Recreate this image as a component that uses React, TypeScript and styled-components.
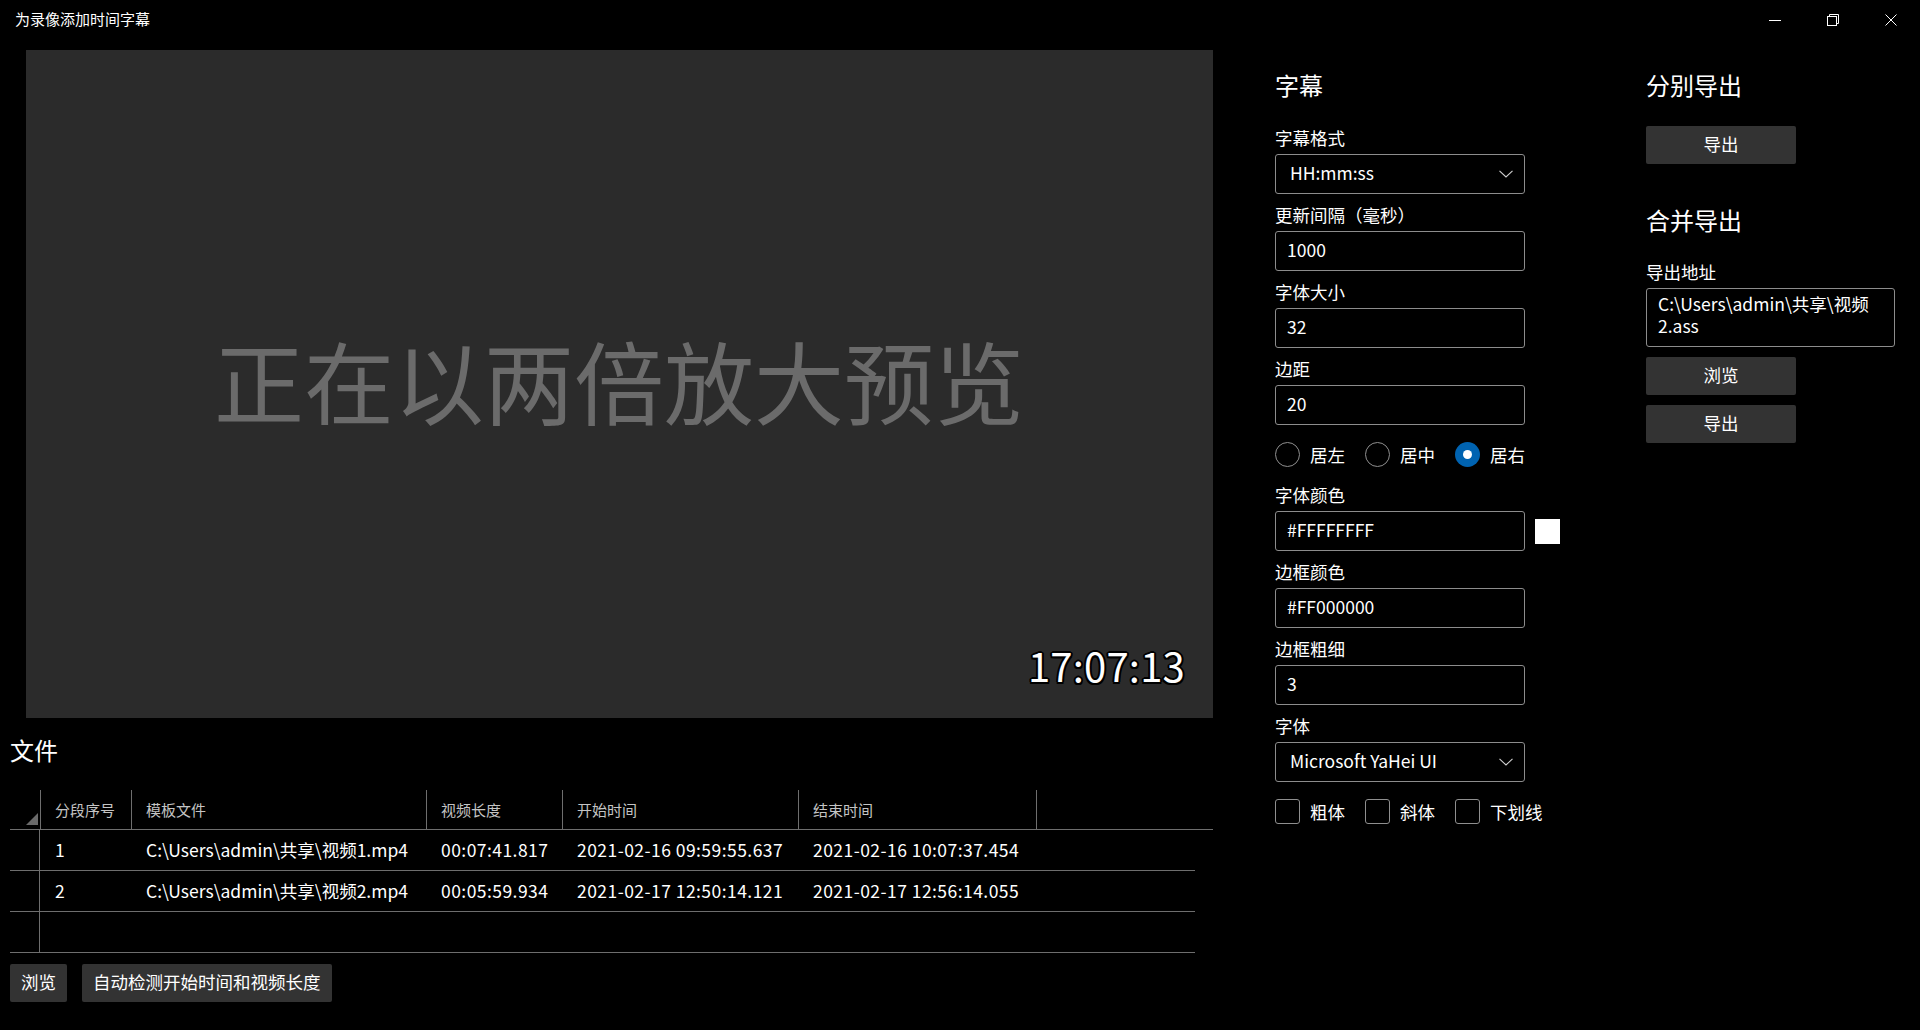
import styled, { createGlobalStyle } from "styled-components";

const GlobalStyle = createGlobalStyle`
  html, body {
    margin: 0;
    padding: 0;
    background: #000;
  }
  body {
    font-family: "Noto Sans CJK SC", "Microsoft YaHei UI", sans-serif;
    color: #fff;
  }
  * {
    box-sizing: border-box;
  }
`;

const Window = styled.div`
  width: 1920px;
  height: 1030px;
  background: #000;
  display: flex;
  flex-direction: column;
  overflow: hidden;
`;

const TitleBar = styled.div`
  height: 40px;
  display: flex;
  align-items: center;
  flex-shrink: 0;
`;

const Title = styled.div`
  flex: 1;
  padding-left: 15px;
  font-size: 15px;
  line-height: 1;
  margin-top: -4px;
`;

const CaptionButton = styled.div`
  width: 58px;
  height: 40px;
  display: flex;
  align-items: center;
  justify-content: center;
`;

const Body = styled.div`
  flex: 1;
  display: flex;
`;

const LeftPane = styled.div`
  width: 1214px;
  padding-left: 10px;
  display: flex;
  flex-direction: column;
`;

const Preview = styled.div`
  position: relative;
  margin: 10px 0 0 16px;
  width: 1187px;
  height: 668px;
  background: #2b2b2b;
  display: flex;
  align-items: center;
  justify-content: center;
`;

const PreviewText = styled.div`
  font-size: 90px;
  line-height: 1;
  color: #6b6b6b;
  margin: 0 0 10px -1px;
`;

const Clock = styled.div`
  position: absolute;
  right: 28px;
  bottom: 33px;
  font-size: 40px;
  line-height: 1;
  color: #fff;
  letter-spacing: 0.2px;
  text-shadow: -1.5px -1.5px 0 #000, 1.5px -1.5px 0 #000, -1.5px 1.5px 0 #000,
    1.5px 1.5px 0 #000, 0 2px 0 #000, 0 -2px 0 #000, 2px 0 0 #000, -2px 0 0 #000;
`;

const SectionTitle = styled.div<{ $gap?: number }>`
  font-size: 24px;
  line-height: 32px;
  margin-top: ${(p) => p.$gap ?? 0}px;
`;

const Table = styled.div`
  margin-top: 24px;
  width: 1203px;
`;

const columns = "30px 91px 295px 136px 236px 238px 1fr";

const HeaderRow = styled.div`
  display: grid;
  grid-template-columns: ${columns};
  height: 40px;
  border-bottom: 1px solid #6e6e6e;
`;

const Corner = styled.div`
  position: relative;
`;

const CornerMark = styled.div`
  position: absolute;
  right: 2px;
  bottom: 4px;
  width: 0;
  height: 0;
  border-left: 12px solid transparent;
  border-bottom: 12px solid #6a6a6a;
`;

const HeadCell = styled.div`
  border-left: 1px solid #6e6e6e;
  padding-left: 14px;
  font-size: 15px;
  color: #c4c4c4;
  display: flex;
  align-items: center;
`;

const DataRow = styled.div`
  display: grid;
  grid-template-columns: ${columns};
  width: 1185px;
  height: 41px;
  border-bottom: 1px solid #6e6e6e;
`;

const RowHeader = styled.div`
  border-right: 1px solid #6e6e6e;
`;

const Cell = styled.div<{ $spaced?: boolean }>`
  padding: 0 0 2px 15px;
  font-size: 17.5px;
  white-space: nowrap;
  letter-spacing: ${(p) => (p.$spaced ? "0.45px" : "0")};
  display: flex;
  align-items: center;
`;

const ButtonRow = styled.div`
  display: flex;
  gap: 15px;
  margin-top: 11px;
`;

const Button = styled.div<{ $width?: number }>`
  height: 38px;
  ${(p) => (p.$width ? `width: ${p.$width}px;` : "padding: 0 11px;")}
  background: #333333;
  border-radius: 2px;
  font-size: 17.5px;
  padding-bottom: 4px;
  display: flex;
  align-items: center;
  justify-content: center;
`;

const SettingsColumn = styled.div`
  width: 285px;
  margin-left: 61px;
  padding-top: 29px;
  display: flex;
  flex-direction: column;
`;

const Fields = styled.div`
  margin-top: 25px;
  display: flex;
  flex-direction: column;
  gap: 9px;
`;

const Field = styled.div`
  display: flex;
  flex-direction: column;
`;

const Label = styled.div`
  font-size: 17.5px;
  line-height: 24px;
  margin-bottom: 4px;
`;

const FieldLine = styled.div`
  display: flex;
  align-items: center;
  gap: 10px;
`;

const TextBox = styled.input`
  width: 250px;
  height: 40px;
  background: #000;
  border: 1px solid #8c8c8c;
  border-radius: 3px;
  color: #fff;
  font-family: "Noto Sans CJK SC", sans-serif;
  font-size: 17.5px;
  padding: 0 11px 4px;
  outline: none;
`;

const Combo = styled.div`
  width: 250px;
  height: 40px;
  border: 1px solid #8c8c8c;
  border-radius: 3px;
  padding: 0 11px 0 14px;
  font-size: 17.5px;
  display: flex;
  align-items: center;
  justify-content: space-between;
`;

const ComboText = styled.span`
  margin-top: -3px;
`;

const Swatch = styled.div<{ $color: string }>`
  width: 25px;
  height: 25px;
  background: ${(p) => p.$color};
`;

const OptionRow = styled.div`
  height: 40px;
  display: flex;
  align-items: center;
`;

const Option = styled.div`
  width: 90px;
  display: flex;
  align-items: center;
  gap: 10px;
  font-size: 17.5px;
`;

const Radio = styled.div<{ $checked?: boolean }>`
  width: 25px;
  height: 25px;
  border-radius: 50%;
  border: ${(p) => (p.$checked ? "none" : "1.5px solid #8f8f8f")};
  background: ${(p) => (p.$checked ? "#0063b1" : "transparent")};
  display: flex;
  align-items: center;
  justify-content: center;
  &::after {
    content: "";
    display: ${(p) => (p.$checked ? "block" : "none")};
    width: 9px;
    height: 9px;
    border-radius: 50%;
    background: #fff;
  }
`;

const Checkbox = styled.div`
  width: 25px;
  height: 25px;
  border-radius: 3px;
  border: 1.5px solid #8f8f8f;
`;

const ExportColumn = styled.div`
  width: 250px;
  margin-left: 86px;
  padding-top: 29px;
  display: flex;
  flex-direction: column;
`;

const Stack = styled.div<{ $top: number }>`
  margin-top: ${(p) => p.$top}px;
  display: flex;
  flex-direction: column;
  gap: 10px;
`;

const MultiLineBox = styled.div`
  width: 249px;
  height: 59px;
  border: 1px solid #8c8c8c;
  border-radius: 3px;
  padding: 4px 11px;
  font-size: 17.5px;
  line-height: 22px;
`;

const Chevron = () => (
  <svg width="14" height="8" viewBox="0 0 14 8">
    <path d="M0.5 0.8 L7 7 L13.5 0.8" fill="none" stroke="#cfcfcf" strokeWidth="1.1" />
  </svg>
);

const TextField = ({ label, value, swatch }: { label: string; value: string; swatch?: string }) => (
  <Field>
    <Label>{label}</Label>
    <FieldLine>
      <TextBox readOnly defaultValue={value} />
      {swatch && <Swatch $color={swatch} />}
    </FieldLine>
  </Field>
);

const ComboField = ({ label, value }: { label: string; value: string }) => (
  <Field>
    <Label>{label}</Label>
    <Combo>
      <ComboText>{value}</ComboText>
      <Chevron />
    </Combo>
  </Field>
);

const files = [
  ["1", "C:\\Users\\admin\\共享\\视频1.mp4", "00:07:41.817", "2021-02-16 09:59:55.637", "2021-02-16 10:07:37.454"],
  ["2", "C:\\Users\\admin\\共享\\视频2.mp4", "00:05:59.934", "2021-02-17 12:50:14.121", "2021-02-17 12:56:14.055"],
];

const App = () => (
  <Window>
    <GlobalStyle />
    <TitleBar>
      <Title>为录像添加时间字幕</Title>
      <CaptionButton>
        <svg width="12" height="12" viewBox="0 0 12 12">
          <line x1="0" y1="6.5" x2="12" y2="6.5" stroke="#fff" strokeWidth="1" />
        </svg>
      </CaptionButton>
      <CaptionButton>
        <svg width="12" height="12" viewBox="0 0 12 12">
          <rect x="0.5" y="2.5" width="9" height="9" fill="none" stroke="#fff" strokeWidth="1" />
          <path d="M2.5 2.5 V0.5 H11.5 V9.5 H9.5" fill="none" stroke="#fff" strokeWidth="1" />
        </svg>
      </CaptionButton>
      <CaptionButton>
        <svg width="12" height="12" viewBox="0 0 12 12">
          <path d="M0.5 0.5 L11.5 11.5 M11.5 0.5 L0.5 11.5" stroke="#fff" strokeWidth="1" />
        </svg>
      </CaptionButton>
    </TitleBar>
    <Body>
      <LeftPane>
        <Preview>
          <PreviewText>正在以两倍放大预览</PreviewText>
          <Clock>17:07:13</Clock>
        </Preview>
        <SectionTitle $gap={16}>文件</SectionTitle>
        <Table>
          <HeaderRow>
            <Corner>
              <CornerMark />
            </Corner>
            <HeadCell>分段序号</HeadCell>
            <HeadCell>模板文件</HeadCell>
            <HeadCell>视频长度</HeadCell>
            <HeadCell>开始时间</HeadCell>
            <HeadCell>结束时间</HeadCell>
            <HeadCell />
          </HeaderRow>
          {files.map((row) => (
            <DataRow key={row[0]}>
              <RowHeader />
              {row.map((v, i) => (
                <Cell key={v} $spaced={i >= 2}>
                  {v}
                </Cell>
              ))}
            </DataRow>
          ))}
          <DataRow>
            <RowHeader />
          </DataRow>
        </Table>
        <ButtonRow>
          <Button>浏览</Button>
          <Button>自动检测开始时间和视频长度</Button>
        </ButtonRow>
      </LeftPane>

      <SettingsColumn>
        <SectionTitle>字幕</SectionTitle>
        <Fields>
          <ComboField label="字幕格式" value="HH:mm:ss" />
          <TextField label="更新间隔（毫秒）" value="1000" />
          <TextField label="字体大小" value="32" />
          <TextField label="边距" value="20" />
          <OptionRow>
            <Option>
              <Radio />
              居左
            </Option>
            <Option>
              <Radio />
              居中
            </Option>
            <Option>
              <Radio $checked />
              居右
            </Option>
          </OptionRow>
          <TextField label="字体颜色" value="#FFFFFFFF" swatch="#ffffff" />
          <TextField label="边框颜色" value="#FF000000" />
          <TextField label="边框粗细" value="3" />
          <ComboField label="字体" value="Microsoft YaHei UI" />
          <OptionRow>
            <Option>
              <Checkbox />
              粗体
            </Option>
            <Option>
              <Checkbox />
              斜体
            </Option>
            <Option>
              <Checkbox />
              下划线
            </Option>
          </OptionRow>
        </Fields>
      </SettingsColumn>

      <ExportColumn>
        <SectionTitle>分别导出</SectionTitle>
        <Stack $top={25}>
          <Button $width={150}>导出</Button>
        </Stack>
        <SectionTitle $gap={40}>合并导出</SectionTitle>
        <Stack $top={24}>
          <Field>
            <Label>导出地址</Label>
            <MultiLineBox>
              C:\Users\admin\共享\视频
              <br />
              2.ass
            </MultiLineBox>
          </Field>
          <Button $width={150}>浏览</Button>
          <Button $width={150}>导出</Button>
        </Stack>
      </ExportColumn>
    </Body>
  </Window>
);

export default App;
